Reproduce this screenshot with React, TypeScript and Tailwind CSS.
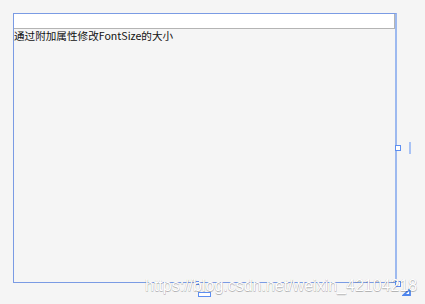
export default function App() {
  return (
    <div className="relative w-[425px] h-[304px] bg-[#f5f5f5] overflow-hidden pt-[13px] pl-[13px]">
      {/* designer frame */}
      <div className="flex flex-col w-[384px] h-[270px] border-l border-t border-b border-r-2 border-l-[#7a9be4] border-t-[#7a9be4] border-b-[#7a9be4] border-r-[#9db9ef]">
        <div className="h-[15px] bg-white border-r border-b border-[#b4b4b4]" />
        <div
          className="text-[10.6px] leading-[14px] text-[#111] whitespace-nowrap"
          style={{ fontFamily: '"Noto Sans CJK SC", "Noto Sans", sans-serif' }}
        >
          通过附加属性修改FontSize的大小
        </div>
      </div>

      {/* resize adorners */}
      <div className="absolute left-[395px] top-[145px] w-[6px] h-[6px] border border-[#5d8ef0] bg-white" />
      <div className="absolute left-[409px] top-[142px] w-[2px] h-[12px] bg-[#a9c3f5]" />
      <div className="absolute left-[195px] top-[281px] w-[4px] h-[4px] border border-[#5d8ef0] bg-white" />
      <div className="absolute left-[198px] top-[292px] w-[13px] h-[5px] border border-[#5d8ef0] bg-white" />
      <div className="absolute left-[395px] top-[281px] w-[6px] h-[6px] border border-[#5d8ef0] bg-white" />
      <svg className="absolute left-[402px] top-[288px]" width="9" height="8" viewBox="0 0 9 8">
        <path d="M8 1 V7 H1.5 Z" fill="#ffffff" stroke="#4f86ee" strokeWidth="1.8" strokeLinejoin="miter" />
      </svg>

      {/* watermark */}
      <div
        className="absolute left-[145px] top-[277px] text-[16px] leading-[18px] text-white whitespace-nowrap"
        style={{
          fontFamily: '"Liberation Sans", Arial, sans-serif',
          textShadow:
            '0.5px 0.5px 0.5px rgba(0,0,0,0.18), -0.5px -0.5px 0.5px rgba(0,0,0,0.12), 0.5px -0.5px 0.5px rgba(0,0,0,0.12), -0.5px 0.5px 0.5px rgba(0,0,0,0.12)',
        }}
      >
        https://blog.csdn.net/weixin_42104218
      </div>
    </div>
  )
}
